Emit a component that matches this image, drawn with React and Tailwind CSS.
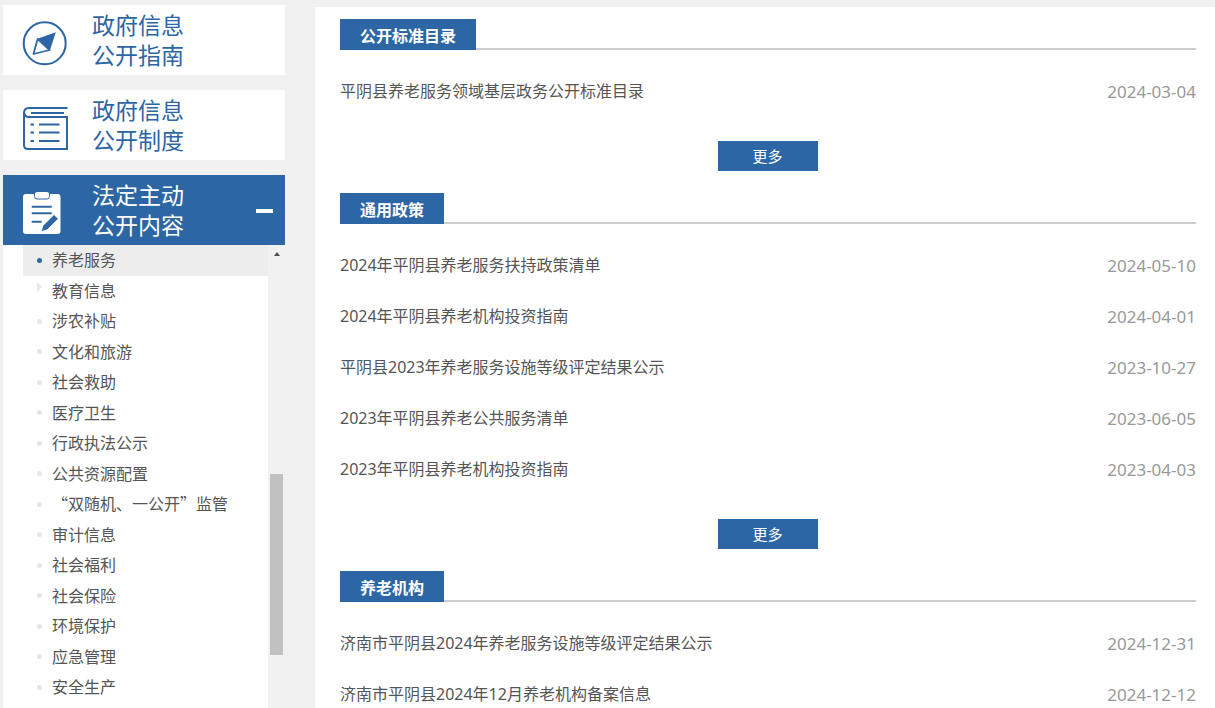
import React from "react";

const FONT = "font-['Noto_Sans','Noto_Sans_CJK_SC',sans-serif]";

function Compass() {
  return (
    <svg className="w-[89px] h-[70px] shrink-0" viewBox="3 5 89 70" fill="none">
      <circle cx="44.7" cy="43.3" r="21" stroke="#2c66a5" strokeWidth="2" />
      <path d="M55.8 32.2 L38 38.6 L50 50 Z" fill="#2c66a5" />
      <path d="M37.6 39 L33.5 54 L49.6 50 Z" stroke="#2c66a5" strokeWidth="1.8" strokeLinejoin="round" />
    </svg>
  );
}

function Directory() {
  return (
    <svg className="w-[89px] h-[70px] shrink-0" viewBox="3 90 89 70" fill="none" stroke="#2c66a5" strokeWidth="2">
      <path d="M67.5 108 H29 Q24 108 24 113 V145 Q24 149 28 149 H67 V117 H29 Q24.5 117 24.5 113" />
      <path d="M31 113 H64" />
      <path d="M30.5 124.5 H34 M39 124.5 H59.5 M30.5 132.5 H34 M39 132.5 H59.5 M30.5 141 H34 M39 141 H59.5" />
    </svg>
  );
}

function Clipboard() {
  return (
    <svg className="w-[89px] h-[70px] shrink-0" viewBox="3 175 89 70" fill="none">
      <rect x="23" y="194" width="37.5" height="40" rx="3" fill="#fff" />
      <rect x="34.5" y="191.5" width="15" height="7.5" rx="2.5" fill="#fff" stroke="#2c66a5" strokeWidth="1" />
      <path d="M31.7 206.7 H51.7 M31.7 213.3 H51.7 M31.7 221.7 H41.7" stroke="#2c66a5" strokeWidth="2" />
      <path d="M41 231.7 L43 225.5 L54 214.5 L58.3 218.8 L47.3 229.8 Z" fill="#2c66a5" stroke="#fff" strokeWidth="0.8" />
    </svg>
  );
}

function Card({ icon, l1, l2, active, minus }) {
  return (
    <div className={`h-[70px] flex items-center ${active ? "bg-[#2c66a5] text-white" : "bg-white text-[#2c66a5]"}`}>
      {icon}
      <div className="text-[23px] leading-[30px] flex-1">
        <div>{l1}</div>
        <div>{l2}</div>
      </div>
      {minus && <div className="w-[17px] h-[4px] bg-white mr-3 mt-[1px]" />}
    </div>
  );
}

const menu = ["养老服务", "教育信息", "涉农补贴", "文化和旅游", "社会救助", "医疗卫生", "行政执法公示", "公共资源配置", "“双随机、一公开”监管", "审计信息", "社会福利", "社会保险", "环境保护", "应急管理", "安全生产"];

function MenuItem({ text, index }) {
  const on = index === 0;
  return (
    <div className={`h-[30.5px] flex items-center text-base text-[#555] ${on ? "bg-[#ededed]" : ""}`}>
      <div className="w-[29px] flex justify-end pr-[10px] shrink-0">
        {index === 1 ? (
          <div className="w-0 h-0 border-y-[5px] border-y-transparent border-l-[5px] border-l-[#e8e8e8] -mt-[8px]" />
        ) : (
          <div className={`w-[5px] h-[5px] rounded-full ${on ? "bg-[#2c66a5]" : "bg-[#e6e6e6]"}`} />
        )}
      </div>
      <span className="whitespace-nowrap pb-[2px] font-['Noto_Sans_CJK_SC',sans-serif]">{text}</span>
    </div>
  );
}

function Section({ title, rows, more }) {
  return (
    <section className="mb-[22px]">
      <div className="h-[31px] border-b-2 border-[#ccc]">
        <div className="inline-block h-[31px] pl-5 pr-5 bg-[#2c66a5] text-white font-bold text-base leading-[34px]">{title}</div>
      </div>
      <div className="mt-4">
        {rows.map(([t, d]) => (
          <div key={t} className="h-[51px] flex items-center justify-between text-[#555]">
            <span className="text-base pb-[2px]">{t}</span>
            <span className="text-[#999] text-[17px]">{d}</span>
          </div>
        ))}
      </div>
      {more && (
        <div className="mt-6 flex justify-center">
          <div className="w-[100px] h-[30px] bg-[#2c66a5] text-white text-[15px] leading-[30px] text-center pr-[1px]">更多</div>
        </div>
      )}
    </section>
  );
}

export default function App() {
  return (
    <div className={`${FONT} h-[708px] overflow-hidden bg-[#f1f1f1] flex pl-[3px]`}>
      <aside className="w-[282px] shrink-0 pt-[5px] flex flex-col">
        <div className="flex flex-col gap-[15px]">
          <Card icon={<Compass />} l1="政府信息" l2="公开指南" />
          <Card icon={<Directory />} l1="政府信息" l2="公开制度" />
          <Card icon={<Clipboard />} l1="法定主动" l2="公开内容" active minus />
        </div>
        <div className="flex flex-1 min-h-0">
          <div className="w-[265px] bg-white pl-5 overflow-hidden">
            {menu.map((m, i) => (
              <MenuItem key={m} text={m} index={i} />
            ))}
          </div>
          <div className="w-[17px] bg-[#f1f1f1] flex flex-col items-center">
            <div className="mt-[7px] w-0 h-0 border-x-[3.5px] border-x-transparent border-b-[4px] border-b-[#505050]" />
            <div className="mt-[218px] w-[13px] h-[181px] bg-[#c1c1c1]" />
          </div>
        </div>
      </aside>
      <main className="ml-[30px] mt-[7px] flex-1 bg-white pl-[25px] pr-[19px] pt-3">
        <Section title="公开标准目录" more rows={[["平阴县养老服务领域基层政务公开标准目录", "2024-03-04"]]} />
        <Section
          title="通用政策"
          more
          rows={[
            ["2024年平阴县养老服务扶持政策清单", "2024-05-10"],
            ["2024年平阴县养老机构投资指南", "2024-04-01"],
            ["平阴县2023年养老服务设施等级评定结果公示", "2023-10-27"],
            ["2023年平阴县养老公共服务清单", "2023-06-05"],
            ["2023年平阴县养老机构投资指南", "2023-04-03"],
          ]}
        />
        <Section
          title="养老机构"
          rows={[
            ["济南市平阴县2024年养老服务设施等级评定结果公示", "2024-12-31"],
            ["济南市平阴县2024年12月养老机构备案信息", "2024-12-12"],
          ]}
        />
      </main>
    </div>
  );
}
